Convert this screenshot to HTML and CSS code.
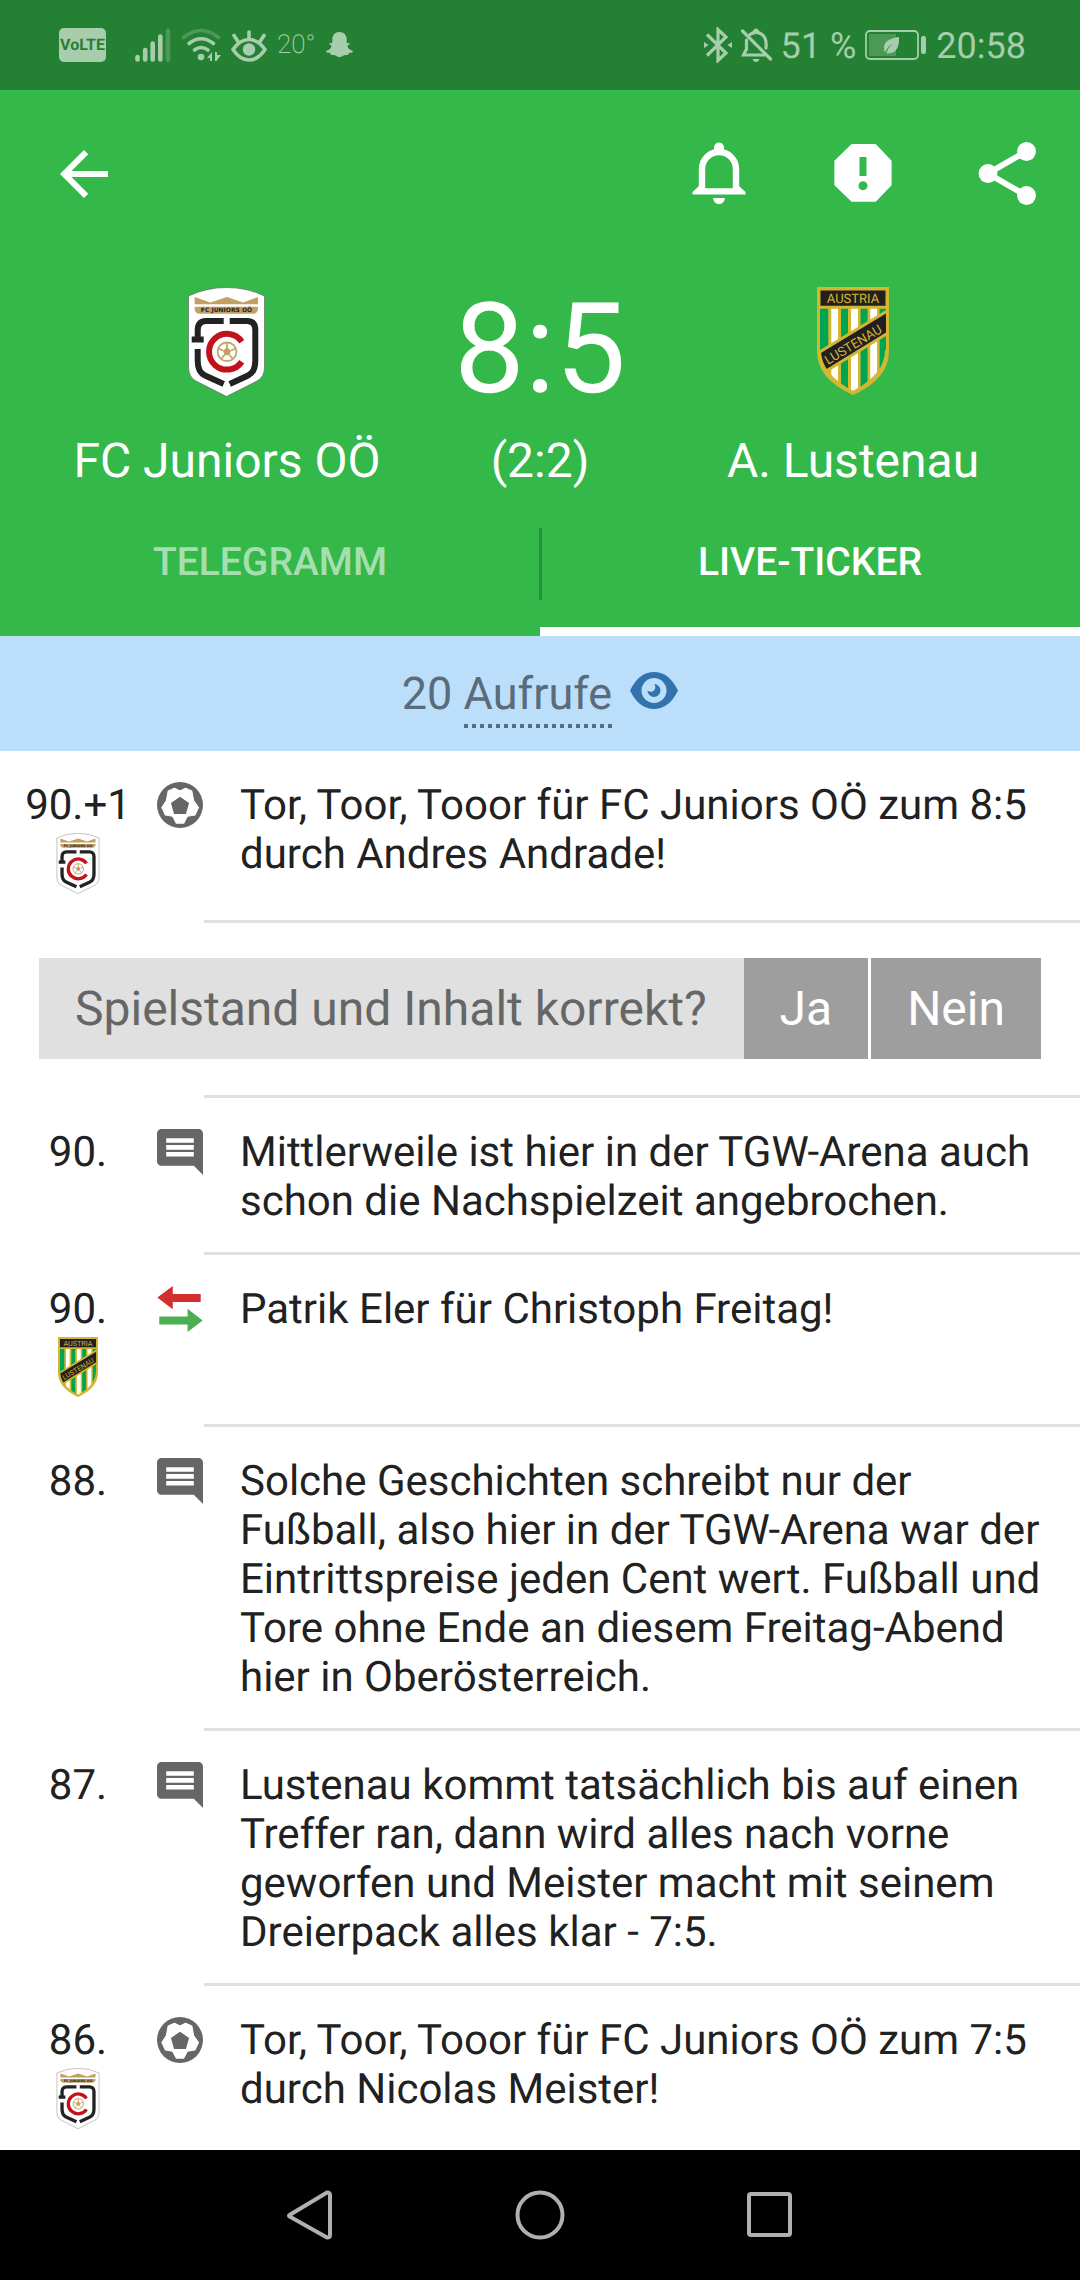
FILE: index.html
```html
<!DOCTYPE html>
<html lang="de">
<head>
    <meta charset="UTF-8">
    <title>FC Juniors OÖ - A. Lustenau | Live-Ticker</title>
    <meta name="viewport" content="width=device-width, initial-scale=1">
    <link rel="stylesheet" href="styles.css">
</head>
<body>
    <!-- shared ticker icons -->
    <svg class="sprite" aria-hidden="true">
        <symbol id="icon-ball" viewBox="0 0 132 132">
            <circle cx="66" cy="66" r="66" fill="#666"/>
            <path d="M66 26L82 18 100 26 105 53 119 73 109 95 87 98 77 118H55L45 98 24 95 14 73 27 53 32 26 50 18Z" fill="#fff" stroke="#fff" stroke-width="3" stroke-linejoin="round"/>
            <path d="M66 42L92 60 83 92H49L40 60Z" fill="#666"/>
        </symbol>
        <symbol id="icon-comment" viewBox="2 2 20 20">
            <path fill="#666" d="M21.990 4c0-1.100-.89-2-1.990-2H4c-1.100 0-2 .9-2 2v12c0 1.100.9 2 2 2h14l4 4-.01-18zM18 14H6v-2h12v2zm0-3H6V9h12v2zm0-3H6V6h12v2z"/>
        </symbol>
        <symbol id="icon-swap" viewBox="0 0 138 140">
            <path d="M0 35L47 0V24H132V49H47V71Z" fill="#d32f2f"/>
            <path d="M138 105L92 69V93H6V117H92V140Z" fill="#4caf50"/>
        </symbol>
    </svg>

    <div class="statusbar">
        <span class="volte">VoLTE</span>
        <svg class="signal" width="36" height="34" viewBox="0 0 36 34">
            <path d="M2.500 29v2.500M10.200 22v9.500M17.700 15.500v16M25.300 8.500v23" stroke="currentColor" stroke-width="4.600" stroke-linecap="round"/>
            <path d="M33 2.500v29" stroke="currentColor" stroke-width="4.600" stroke-linecap="round" opacity=".3"/>
        </svg>
        <svg width="40" height="34" viewBox="0 0 40 34" fill="none" stroke="currentColor" stroke-width="3.600" stroke-linecap="round">
            <path d="M2.500 9.500Q20-4.500 37.500 9.500" opacity=".3"/>
            <path d="M8 15.500Q20 6 32.500 15.500M13.500 22Q20 17 27 22"/>
            <circle cx="20" cy="29" r="3.300" fill="currentColor" stroke="none"/>
            <path d="M26 30l5-6v9h-2v-3zM34 24h2v3h4l-4.500 6H34z" fill="currentColor" stroke="none"/>
        </svg>
        <svg width="36" height="33" viewBox="0 0 36 33" fill="none" stroke="currentColor" stroke-width="3.600" stroke-linecap="round">
            <path d="M2 20.500Q9 10.500 18 10.500T34 20.500Q27 31 18 31T2 20.500ZM18 3v7M3 6.500l4 6M33 6.500l-4 6"/>
            <circle cx="18" cy="20.500" r="6.200" fill="currentColor" stroke="none"/>
        </svg>
        <span class="temp">20°</span>
        <svg width="27" height="26" viewBox="0 0 27 26">
            <path fill="currentColor" d="M13.500 0c4.500 0 7.200 3 7.200 7.500V11c1 .3 2.800-.6 3 .5.200 1.200-2.600 1.400-2.200 3 .6 2 3 4 5.500 4.500-.3 2.200-3 1.600-4 2-.7.500-.3 1.700-1.500 2-1.600.2-2.800-.5-4.500.8-2.200 1.800-4.800 1.800-7 0-1.700-1.300-2.900-.6-4.500-.8-1.200-.3-.8-1.500-1.500-2-1-.4-3.700.2-4-2 2.500-.5 4.900-2.500 5.500-4.500.4-1.600-2.400-1.800-2.200-3 .2-1.100 2-.2 3-.5V7.500C6.300 3 9 0 13.500 0z"/>
        </svg>

        <span class="status-right">
            <svg width="28" height="36" viewBox="0 0 28 36" fill="none" stroke="currentColor" stroke-width="3.200">
                <path d="M3 7.500L22 26 14 33.500V2.500L22 10 3 28.500"/>
                <path d="M0 15l4.500 3L0 21zM28 15l-4.500 3 4.500 3z" fill="currentColor" stroke="none"/>
            </svg>
            <svg width="31" height="34" viewBox="0 0 31 34" fill="none" stroke="currentColor" stroke-width="3.200">
                <path d="M9 6.500Q15.500 2 21 6.500 26 10 25 20M5.500 12V21L2.500 27H24M12.500 5q2.500-6 5 0M1.500 3L29.500 31" stroke-linecap="round"/>
                <path d="M11.500 31h7q-1 3-3.500 3t-3.500-3z" fill="currentColor" stroke="none"/>
            </svg>
            <span class="status-text">51 %</span>
            <svg class="battery" width="62" height="30" viewBox="0 0 62 30">
                <rect x="1" y="1" width="52" height="28" rx="4" fill="none" stroke="currentColor" stroke-width="1.800"/>
                <rect x="4" y="4" width="27" height="22" opacity=".3" fill="currentColor"/>
                <path d="M34 7Q19 9 19 17.500q0 3 1 5 3-7 8-8.500-5 3-6.500 9.500Q35 24 34 7z" fill="currentColor"/>
                <rect x="56" y="6" width="5" height="18" rx="2" fill="currentColor"/>
            </svg>
            <time class="status-text">20:58</time>
        </span>
    </div>

    <header class="header">
        <div class="toolbar">
            <button class="icon-btn back" aria-label="Zurück">
                <svg viewBox="0 0 24 24"><path d="M20 11H7.830l5.590-5.590L12 4l-8 8 8 8 1.410-1.410L7.830 13H20v-2z"/></svg>
            </button>
            <button class="icon-btn" aria-label="Benachrichtigungen">
                <svg viewBox="0 0 72 72">
                    <path d="M19 53V31a17 17 0 0 1 34 0V53" fill="none" stroke="#fff" stroke-width="6.400"/>
                    <path d="M9.500 56.500V54l6.500-6h6v2.300h28V48h6l6.500 6v2.500z"/>
                    <path d="M31 14V9.500a5 5 0 0 1 10 0V14zM30 60h12q-1 6-6 6t-6-6z"/>
                </svg>
            </button>
            <button class="icon-btn" aria-label="Melden">
                <svg viewBox="0 0 72 72">
                    <path fill-rule="evenodd" d="M24.600 6H48.700L64.600 22.700V47.300L48.700 63.700H24.600L7.400 47.300V22.700ZM32.500 19V38h7V19zM36 43.200a4.500 4.500 0 1 0 .01 0z"/>
                </svg>
            </button>
            <button class="icon-btn" aria-label="Teilen">
                <svg viewBox="0 0 72 72">
                    <path d="M55 13.500L17 35.500 55 57.500" fill="none" stroke="#fff" stroke-width="6"/>
                    <circle cx="55.500" cy="13.500" r="9.400"/><circle cx="17" cy="35.500" r="9.400"/><circle cx="55.500" cy="57.500" r="9.400"/>
                </svg>
            </button>
        </div>

        <div class="match">
            <div class="team">
                <svg class="crest" viewBox="0 0 77 110">
                    <g id="crest-juniors">
                        <path d="M.5 9Q18 .5 38.500 .5T76.500 9V80Q76.500 90 69 94L38.500 109.500 8 94Q.5 90 .5 80Z" fill="#fff" stroke="#5d6b5f" stroke-width=".7"/>
                        <path d="M6.700 10l15.600 5.500L39 10l16 5.500L70 10v7.300H6.700z" fill="#c39f62"/>
                        <path d="M6.700 19.700H70v2.500q-1 4.500-5 4.500H12q-4.500 0-5.300-4.500z" fill="#c39f62"/>
                        <text x="38.500" y="25" text-anchor="middle" class="crest-name">FC JUNIORS OÖ</text>
                        <g fill="none" stroke="#222" stroke-width="6">
                            <path d="M35.700 34H18Q9.700 34 9.700 43V52"/>
                            <path d="M3.700 52.500H15.700"/>
                            <path d="M9.700 62V74Q9.700 85 17 88.500L35.700 97"/>
                            <path d="M41.700 34H59Q67.300 34 67.300 43V74Q67.300 85 60 88.500L41.700 97"/>
                        </g>
                        <path d="M53.800 54.700A17.900 17.900 0 1 0 53.800 74.700" fill="none" stroke="#c1121c" stroke-width="6"/>
                        <circle cx="39" cy="64.700" r="9.400" fill="#fff" stroke="#c39f62" stroke-width="1.700"/>
                        <path d="M39 60.500l4 3-1.500 4.700h-5L35 63.500z" fill="#c39f62"/>
                        <path d="M39 61v-5M43 63.500l5-2M41.500 68l3.500 4M36.500 68L33 72M35 63.500l-5-2" stroke="#c39f62" stroke-width="1.600"/>
                    </g>
                </svg>
                <span class="name">FC Juniors OÖ</span>
            </div>
            <div class="result">
                <span class="score">8:5</span>
                <span class="halftime">(2:2)</span>
            </div>
            <div class="team">
                <svg class="crest" viewBox="0 0 72 110">
                    <g id="crest-lustenau">
                        <clipPath id="shield"><path d="M3 3H69V63Q69 88 36 105 3 88 3 63Z"/></clipPath>
                        <path d="M0 0H72V64Q72 92 36 108 0 92 0 64Z" fill="#d3b632"/>
                        <g clip-path="url(#shield)">
                            <path d="M3 21.700h8.300V108H3zM24 21.700h7V108h-7zM43.600 21.700h7V108h-7zM62.600 21.700H69V108h-6.400z" fill="#00a551"/>
                            <path d="M14.300 21.700H21V108h-6.700zM34 21.700h7V108h-7zM53.300 21.700H60V108h-6.700z" fill="#fff"/>
                            <path d="M-4 69L76 20.500V43L-4 92z" fill="#231f20" stroke="#d3b632" stroke-width="3"/>
                        </g>
                        <path d="M3 63Q3 88 36 105 69 88 69 63" fill="none" stroke="#d3b632" stroke-width="2"/>
                        <path d="M3.500 3.500h65v15.200h-65z" fill="#231f20"/>
                        <text x="36" y="15.700" text-anchor="middle" class="crest-band">AUSTRIA</text>
                        <text transform="translate(11 78) rotate(-31)" class="crest-band">LUSTENAU</text>
                    </g>
                </svg>
                <span class="name">A. Lustenau</span>
            </div>
        </div>

        <nav class="tabs">
            <a href="#telegramm">TELEGRAMM</a>
            <a href="#ticker" class="active">LIVE-TICKER</a>
        </nav>
    </header>

    <main id="ticker">
        <div class="views">
            <span>20 <span class="dotted">Aufrufe</span></span>
            <svg width="48" height="37" viewBox="0 0 48 37">
                <path d="M0 18.500Q9 0 24 0T48 18.500Q39 37 24 37T0 18.500Z" fill="#3273ad"/>
                <circle cx="24" cy="18.500" r="12.500" fill="#bbdefb"/>
                <path d="M24 12a6.500 6.500 0 1 1-6.500 6.500 4 4 0 0 0 6.500-6.500z" fill="#3273ad"/>
            </svg>
        </div>

        <article class="entry">
            <div class="minute">90.+1 <svg viewBox="0 0 77 110"><use href="#crest-juniors"/></svg></div>
            <svg class="type"><use href="#icon-ball"/></svg>
            <p>Tor, Toor, Tooor für FC Juniors OÖ zum 8:5 durch Andres Andrade!</p>
        </article>

        <div class="vote">
            <span class="question">Spielstand und Inhalt korrekt?</span>
            <button>Ja</button>
            <button>Nein</button>
        </div>

        <article class="entry">
            <div class="minute">90.</div>
            <svg class="type"><use href="#icon-comment"/></svg>
            <p>Mittlerweile ist hier in der TGW-Arena auch schon die Nachspielzeit angebrochen.</p>
        </article>

        <article class="entry">
            <div class="minute">90. <svg viewBox="0 0 72 110"><use href="#crest-lustenau"/></svg></div>
            <svg class="type"><use href="#icon-swap"/></svg>
            <p>Patrik Eler für Christoph Freitag!</p>
        </article>

        <article class="entry">
            <div class="minute">88.</div>
            <svg class="type"><use href="#icon-comment"/></svg>
            <p>Solche Geschichten schreibt nur der Fußball, also hier in der TGW-Arena war der Eintrittspreise jeden Cent wert. Fußball und Tore ohne Ende an diesem Freitag-Abend hier in Oberösterreich.</p>
        </article>

        <article class="entry">
            <div class="minute">87.</div>
            <svg class="type"><use href="#icon-comment"/></svg>
            <p>Lustenau kommt tatsächlich bis auf einen Treffer ran, dann wird alles nach vorne geworfen und Meister macht mit seinem Dreierpack alles klar - 7:5.</p>
        </article>

        <article class="entry">
            <div class="minute">86. <svg viewBox="0 0 77 110"><use href="#crest-juniors"/></svg></div>
            <svg class="type"><use href="#icon-ball"/></svg>
            <p>Tor, Toor, Tooor für FC Juniors OÖ zum 7:5 durch Nicolas Meister!</p>
        </article>
    </main>

    <div class="navbar">
        <button aria-label="Zurück"><svg viewBox="0 0 50 50"><path d="M4.500 25L42 2.500Q45 2.500 45 5V45Q45 47.500 42 47.500L4.500 26.500Q3.500 25.500 4.500 25Z"/></svg></button>
        <button aria-label="Startseite"><svg viewBox="0 0 50 50"><circle cx="25" cy="25" r="22.500"/></svg></button>
        <button aria-label="Übersicht"><svg viewBox="0 0 50 50"><rect x="4" y="4" width="41" height="41" rx="2"/></svg></button>
    </div>
</body>
</html>
```

FILE: styles.css
```css
* { box-sizing: border-box; }
body {
    margin: 0; height: 100vh; display: flex; flex-direction: column;
    font-family: Roboto, "Noto Sans", sans-serif; font-size: 42px; line-height: 49px;
    color: #212121; background: #fff; text-rendering: geometricPrecision;
}
button { border: none; padding: 0; background: none; font: inherit; color: inherit; cursor: pointer; }
svg { display: block; flex: none; }
.sprite { position: absolute; width: 0; height: 0; }
.crest-name { font: bold 6px "DejaVu Sans", sans-serif; fill: #222; }
.crest-band { font: 13px Roboto, sans-serif; fill: #d3b632; }

/* system status bar */
.statusbar {
    flex: none; display: flex; align-items: center; height: 90px; padding: 0 54px 0 59px;
    background: #248133; color: #a7cdad; font-size: 36px; gap: 10px;
}
.volte {
    width: 47px; height: 34px; line-height: 34px; border-radius: 5px; text-align: center;
    background: #a7cdad; color: #248133; font-family: "Liberation Sans Narrow", Roboto, sans-serif; font-size: 16px; font-weight: bold;
}
.signal { margin-left: 19px; }
.temp { font-size: 26px; font-weight: 200; }
.status-right { display: flex; align-items: center; gap: 9px; margin-left: auto; }
.status-text { padding-top: 3px; }

/* match header */
.header { flex: none; background: #33b849; color: #fff; }
.toolbar { display: flex; align-items: center; gap: 72px; height: 168px; padding: 0 37px 0 48px; }
.icon-btn { width: 72px; height: 72px; }
.icon-btn svg { width: 72px; height: 72px; fill: #fff; }
.back { margin-right: auto; }
.match { display: grid; grid-template-columns: 1fr auto 1fr; padding: 18px 0 3px; font-size: 48px; line-height: 56px; text-align: center; }
.team, .result { display: flex; flex-direction: column; align-items: center; justify-content: space-between; }
.crest { height: 110px; margin-top: 11px; }
.score { font-size: 126px; line-height: 147px; margin-bottom: 10px; }
.tabs { display: flex; height: 144px; position: relative; font-size: 39px; font-weight: 500; }
.tabs a {
    flex: 1; display: flex; align-items: center; justify-content: center; padding-top: 6px;
    color: rgba(255, 255, 255, .58); text-decoration: none; border-bottom: 9px solid transparent;
}
.tabs .active { color: #fff; border-color: #fff; }
.tabs::after { content: ""; position: absolute; left: 50%; top: 36px; width: 3px; height: 72px; margin-left: -1px; background: #28923a; }

/* ticker */
main { flex: 1; min-height: 0; overflow-y: auto; scrollbar-width: none; }
.views {
    display: flex; align-items: center; justify-content: center; gap: 18px; height: 115px;
    background: #bbdefb; color: #5a6b79; font-size: 45px;
}
.views svg { margin-bottom: 7px; }
.dotted { padding-bottom: 8px; background: repeating-linear-gradient(90deg, #5a6b79 0 4px, transparent 4px 8px) bottom / 100% 4px no-repeat; }
.entry {
    display: grid; grid-template-columns: 156px 48px 1fr; align-items: start;
    background: linear-gradient(#e0e0e0, #e0e0e0) 204px bottom / 100% 3px no-repeat; padding: 30px 36px 29px 0;
}
.minute { text-align: center; }
.minute svg { width: 44px; height: 61px; margin: 3px auto 0; }
.type { width: 46px; height: 46px; margin: 1px 0 0 1px; }
.entry p { margin: 0 0 0 36px; }
.vote {
    display: flex; gap: 3px; padding: 35px 39px 39px; font-size: 48px; line-height: 101px;
    background: linear-gradient(#e0e0e0, #e0e0e0) 204px bottom / 100% 3px no-repeat;
}
.question { flex: 1; padding-left: 36px; margin-right: -3px; background: #e0e0e0; color: #666; }
.vote button { padding: 0 36px; background: #9e9e9e; color: #fff; }

/* system navigation */
.navbar { flex: none; display: flex; align-items: center; justify-content: center; gap: 180px; height: 130px; background: #000; }
.navbar svg { width: 50px; height: 50px; fill: none; stroke: #b0b0b0; stroke-width: 4; }
```
